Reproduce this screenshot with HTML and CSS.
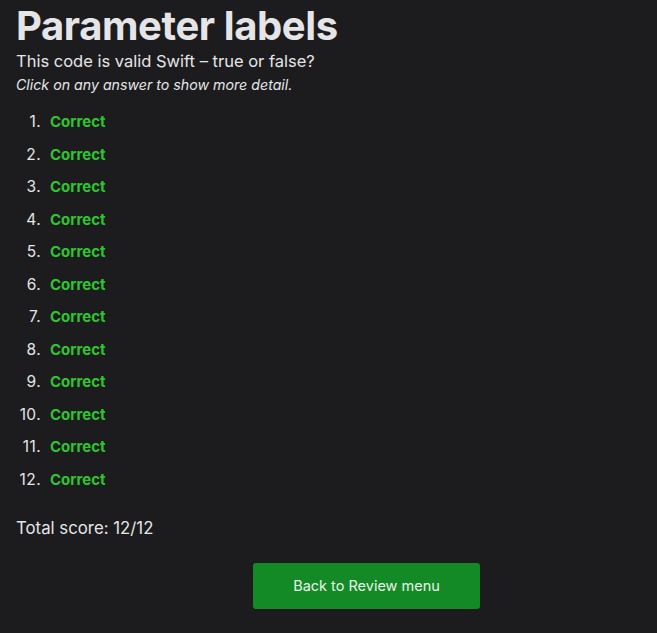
FILE: index.html
```html
<!DOCTYPE html>
<html lang="en">
<head>
<meta charset="utf-8">
<title>Parameter labels</title>
<link rel="stylesheet" href="styles.css">
</head>
<body>
<main class="page">
  <h1 class="title">Parameter labels</h1>
  <p class="subtitle">This code is valid Swift – true or false?</p>
  <p class="hint">Click on any answer to show more detail.</p>
  <ol class="answers">
    <li><span class="correct">Correct</span></li>
    <li><span class="correct">Correct</span></li>
    <li><span class="correct">Correct</span></li>
    <li><span class="correct">Correct</span></li>
    <li><span class="correct">Correct</span></li>
    <li><span class="correct">Correct</span></li>
    <li><span class="correct">Correct</span></li>
    <li><span class="correct">Correct</span></li>
    <li><span class="correct">Correct</span></li>
    <li><span class="correct">Correct</span></li>
    <li><span class="correct">Correct</span></li>
    <li><span class="correct">Correct</span></li>
  </ol>
  <p class="score">Total score: 12/12</p>
  <div class="actions">
    <button class="back">Back to Review menu</button>
  </div>
</main>
</body>
</html>
```

FILE: styles.css
```css
html, body {
  margin: 0;
  padding: 0;
  background: #1c1c1e;
}
body {
  font-family: Inter, "Noto Sans", sans-serif;
  color: #e5e5e7;
}
.page {
  padding: 0 16px;
}
.title {
  margin: 0;
  padding-top: 2px;
  font-size: 40px;
  font-weight: 700;
  line-height: 48px;
  letter-spacing: -0.4px;
  color: #e5e5e7;
}
.subtitle {
  margin: 0;
  font-size: 16.5px;
  line-height: 22px;
}
.hint {
  margin: 3px 0 0;
  font-size: 14.2px;
  font-style: italic;
  line-height: 20px;
}
.answers {
  list-style: none;
  counter-reset: answer;
  margin: 17px 0 0;
  padding: 0;
  font-size: 15px;
  line-height: 20px;
}
.answers li {
  counter-increment: answer;
  display: flex;
  align-items: baseline;
  gap: 9px;
  margin-bottom: 12.5px;
}
.answers li::before {
  content: counter(answer) ".";
  width: 25px;
  text-align: right;
  font-size: 15.5px;
  letter-spacing: 0.4px;
  color: #e5e5e7;
}
.correct {
  color: #2fc52f;
  font-weight: 700;
}
.score {
  margin: 27px 0 0;
  font-size: 16.8px;
  line-height: 22px;
}
.actions {
  display: flex;
  padding-left: 237px;
  margin-top: 24px;
}
.back {
  width: 227px;
  height: 46px;
  border: none;
  border-radius: 3px;
  background: #138a25;
  color: #e8f3ea;
  font-family: Inter, "Noto Sans", sans-serif;
  font-size: 14.5px;
}
```
